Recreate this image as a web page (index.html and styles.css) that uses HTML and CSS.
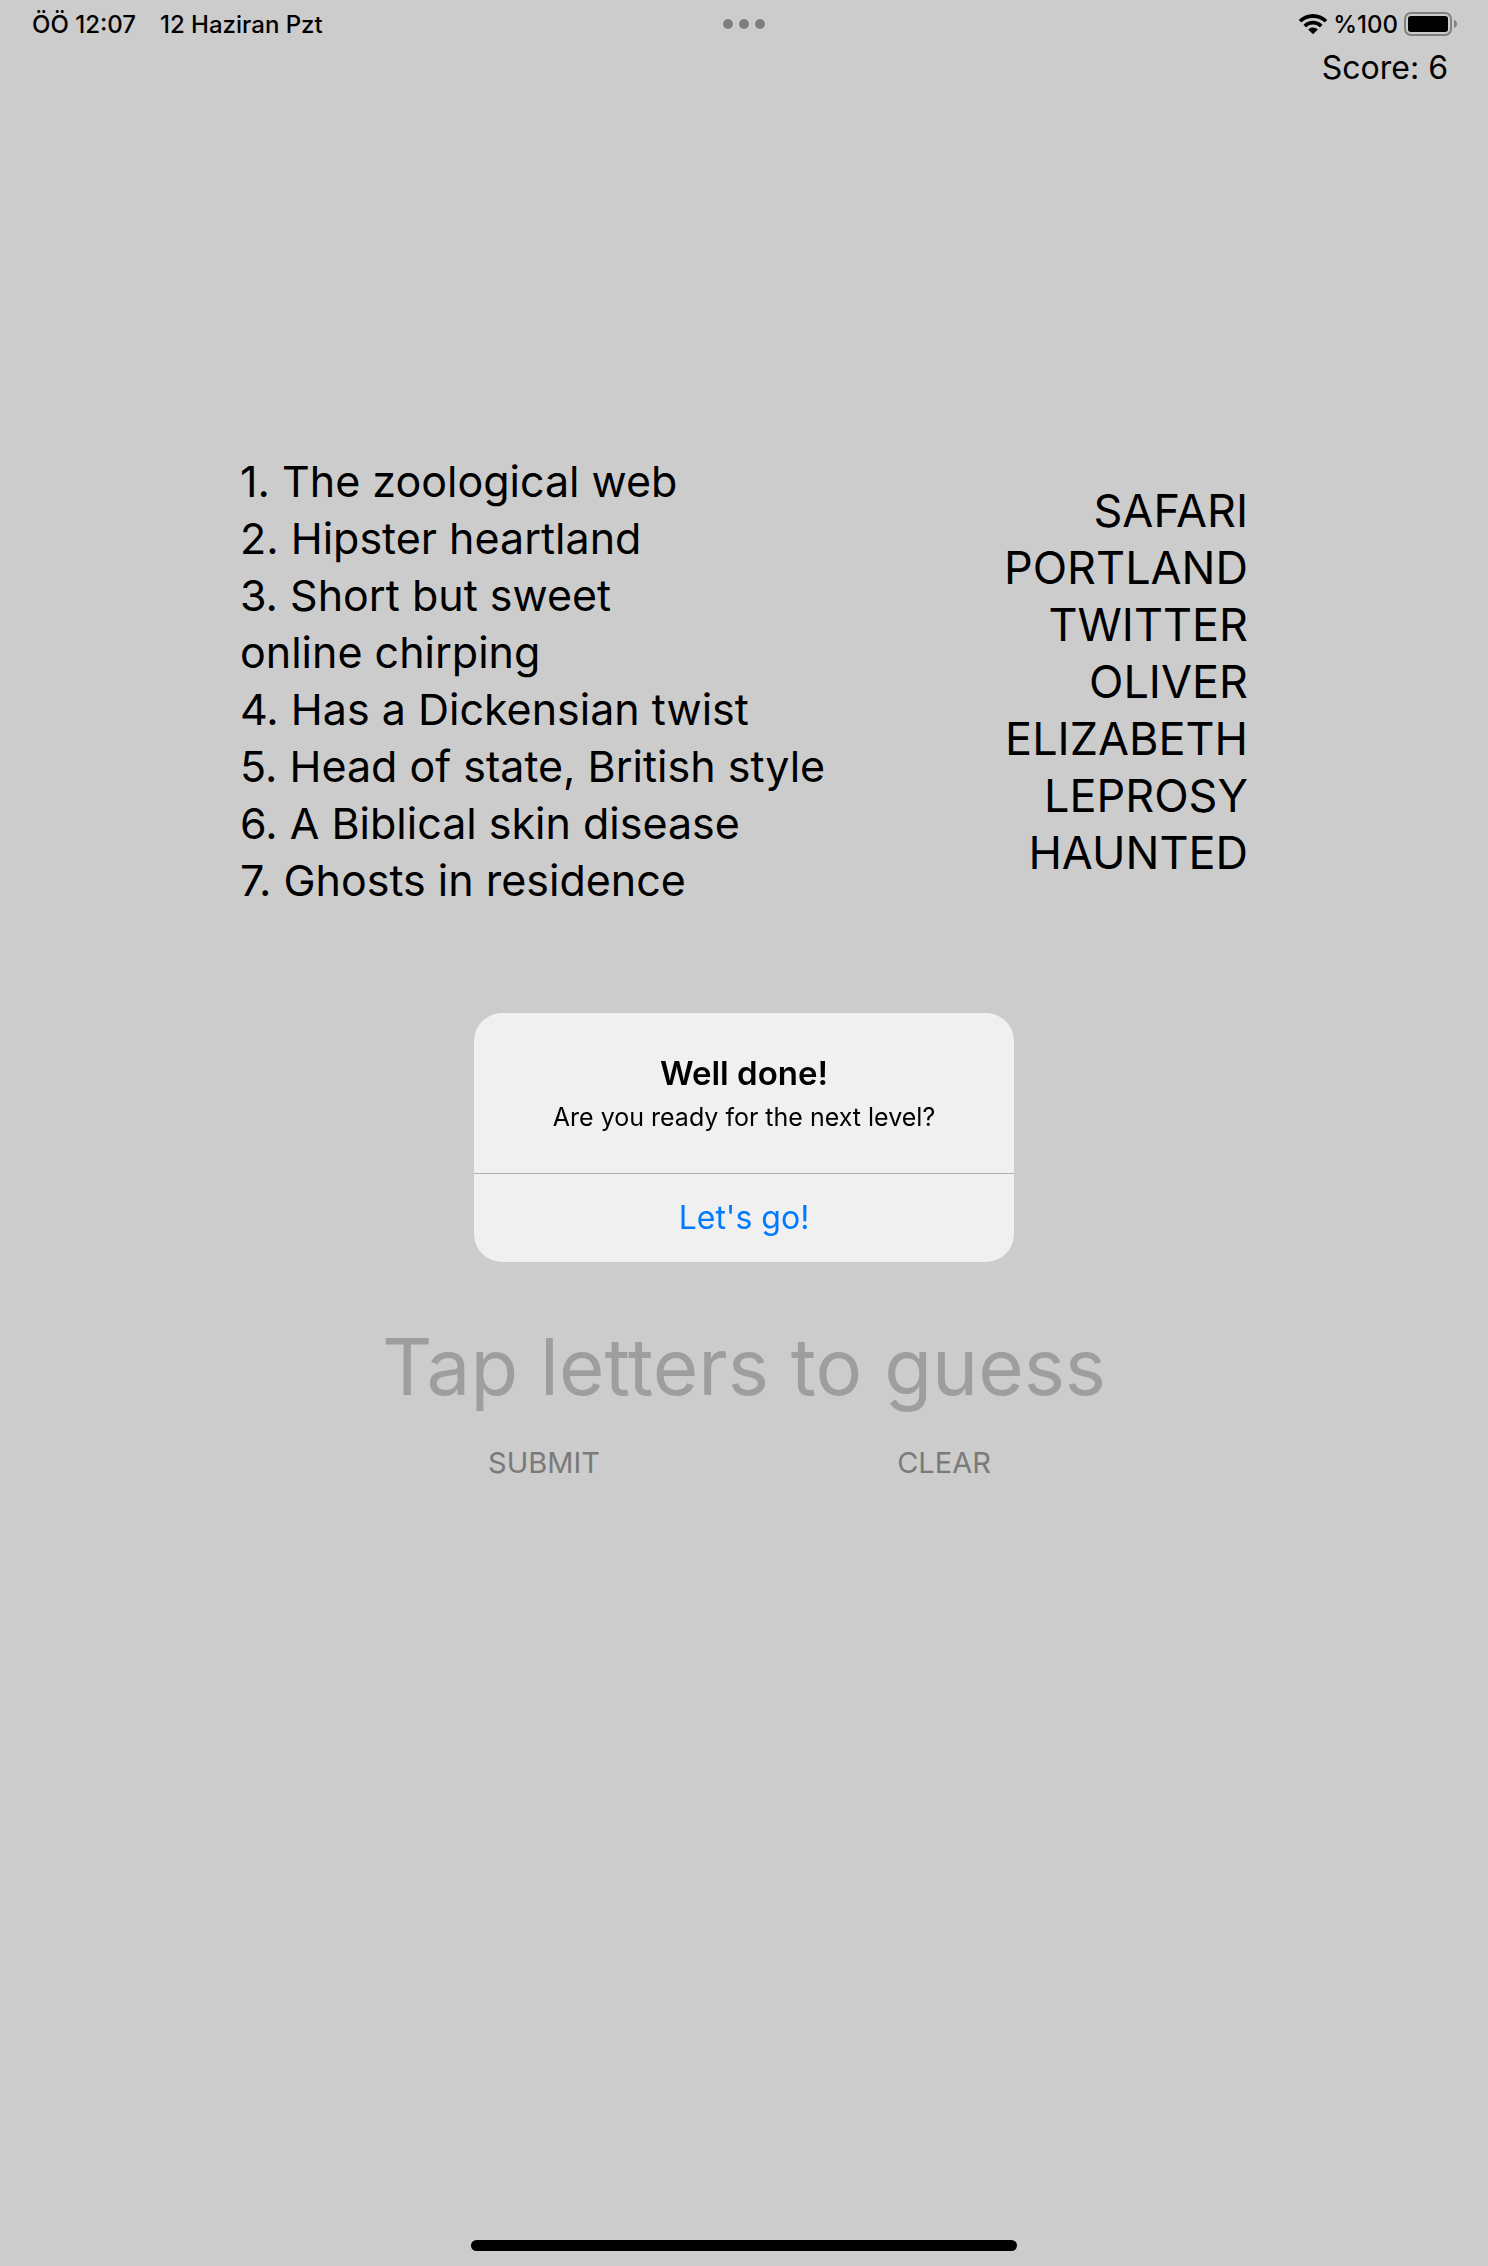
FILE: index.html
```html
<!DOCTYPE html>
<html lang="en">
<head>
<meta charset="utf-8">
<meta name="viewport" content="width=device-width, initial-scale=1">
<title>Word Game</title>
<link rel="stylesheet" href="styles.css">
</head>
<body>
<div class="screen">
  <header class="status" lang="tr">
    <div class="status-left"><span>ÖÖ 12:07</span><span>12 Haziran Pzt</span></div>
    <div class="dots"><span></span><span></span><span></span></div>
    <div class="status-right">
      <svg class="wifi" viewBox="0 0 28 20" aria-hidden="true">
        <path d="M14 0C8.600 0 3.700 2.100.2 5.500a.7.7 0 0 0 0 1L1.900 8.100a.7.7 0 0 0 1 0A16 16 0 0 1 14 3.900a16 16 0 0 1 11.100 4.200.7.7 0 0 0 1 0l1.700-1.600a.7.7 0 0 0 0-1C24.300 2.100 19.400 0 14 0z"/>
        <path d="M14 6.800c-3.500 0-6.700 1.300-9.100 3.500a.7.7 0 0 0 0 1l1.700 1.600a.7.7 0 0 0 1 0A9.500 9.500 0 0 1 14 10.500a9.500 9.500 0 0 1 6.400 2.400.7.7 0 0 0 1 0l1.700-1.600a.7.7 0 0 0 0-1A13.500 13.500 0 0 0 14 6.800z"/>
        <path d="M14 13.400c-1.700 0-3.200.6-4.400 1.600a.7.7 0 0 0 0 1l3.900 3.700a.7.7 0 0 0 1 0l3.900-3.700a.7.7 0 0 0 0-1A6.800 6.800 0 0 0 14 13.400z"/>
      </svg>
      <span>%100</span>
      <svg class="battery" viewBox="0 0 54 24" aria-hidden="true">
        <rect x="1" y="1" width="46" height="22" rx="6" fill="none" stroke="#808080" stroke-width="2"/>
        <rect x="4" y="4" width="40" height="16" rx="3"/>
        <path d="M50 8c2 .6 3 2.200 3 4s-1 3.400-3 4z" fill="#808080"/>
      </svg>
    </div>
  </header>

  <p class="score">Score: 6</p>

  <main class="game">
    <div class="board">
      <div class="clues">
        <p>1. The zoological web</p>
        <p>2. Hipster heartland</p>
        <p>3. Short but sweet<br>online chirping</p>
        <p>4. Has a Dickensian twist</p>
        <p>5. Head of state, British style</p>
        <p>6. A Biblical skin disease</p>
        <p>7. Ghosts in residence</p>
      </div>
      <div class="answers">
        <p>SAFARI</p>
        <p>PORTLAND</p>
        <p>TWITTER</p>
        <p>OLIVER</p>
        <p>ELIZABETH</p>
        <p>LEPROSY</p>
        <p>HAUNTED</p>
      </div>
    </div>
    <input class="guess" type="text" placeholder="Tap letters to guess" aria-label="Current guess" readonly>
    <div class="actions">
      <button type="button">SUBMIT</button>
      <button type="button">CLEAR</button>
    </div>
  </main>

  <div class="home-bar"></div>
</div>

<div class="overlay">
  <section class="alert" role="alertdialog" aria-labelledby="alert-title" aria-describedby="alert-text">
    <div class="alert-body">
      <h1 id="alert-title">Well done!</h1>
      <p id="alert-text">Are you ready for the next level?</p>
    </div>
    <button class="alert-action" type="button">Let's go!</button>
  </section>
</div>
</body>
</html>
```
FILE: styles.css
```css
* {
  box-sizing: border-box;
}

body,
p,
h1 {
  margin: 0;
}

body {
  background: #ccc;
  color: #000;
  font-family: Inter, "Liberation Sans", sans-serif;
}

button,
input {
  border: 0;
  padding: 0;
  background: none;
  font-family: inherit;
}

.screen {
  display: flex;
  flex-direction: column;
  min-height: 100vh;
  padding-bottom: 15px;
}

.status {
  display: grid;
  grid-template-columns: 1fr auto 1fr;
  align-items: center;
  height: 48px;
  padding: 0 30px;
  font-size: 24px;
  font-weight: 500;
}

.status-left {
  display: flex;
  gap: 24px;
  padding-left: 2px;
}

.status-right {
  display: flex;
  align-items: center;
  justify-content: flex-end;
  gap: 6px;
}

.wifi {
  width: 28px;
  height: 20px;
}

.battery {
  width: 54px;
  height: 24px;
}

.dots {
  display: flex;
  gap: 6px;
}

.dots span {
  width: 10px;
  height: 10px;
  border-radius: 50%;
  background: #7e7e7e;
}

.score {
  padding: 0 40px;
  font-size: 32px;
  line-height: 40px;
  text-align: right;
}

.game {
  display: flex;
  flex-direction: column;
  align-items: center;
  padding-top: 365px;
}

.board {
  display: flex;
  align-items: center;
  justify-content: space-between;
  align-self: stretch;
  padding: 0 240px;
  font-size: 45px;
  line-height: 57px;
}

.clues {
  font-size: 43px;
}

.answers {
  text-align: right;
}

.guess {
  align-self: stretch;
  height: 100px;
  margin-top: 407px;
  font-size: 78px;
  text-align: center;
}

.guess::placeholder {
  color: #9e9e9e;
  opacity: 1;
}

.actions {
  display: flex;
  gap: 200px;
  margin-top: 2px;
}

.actions button {
  width: 200px;
  height: 88px;
  color: #7a7a7a;
  font-size: 29px;
}

.home-bar {
  align-self: center;
  width: 546px;
  height: 11px;
  margin-top: auto;
  border-radius: 6px;
  background: #000;
}

.overlay {
  position: fixed;
  inset: 0;
  display: flex;
  align-items: center;
  justify-content: center;
  padding-top: 8px;
}

.alert {
  width: 540px;
  overflow: hidden;
  border-radius: 28px;
  background: #f0f0f0;
  text-align: center;
}

.alert-body {
  padding: 40px 32px;
  border-bottom: 1px solid #b0b0b0;
}

.alert h1 {
  font-size: 33px;
  font-weight: 600;
  line-height: 40px;
}

.alert p {
  margin-top: 8px;
  font-size: 25px;
  line-height: 32px;
}

.alert-action {
  width: 100%;
  height: 88px;
  color: #007aff;
  font-size: 32px;
}
```
